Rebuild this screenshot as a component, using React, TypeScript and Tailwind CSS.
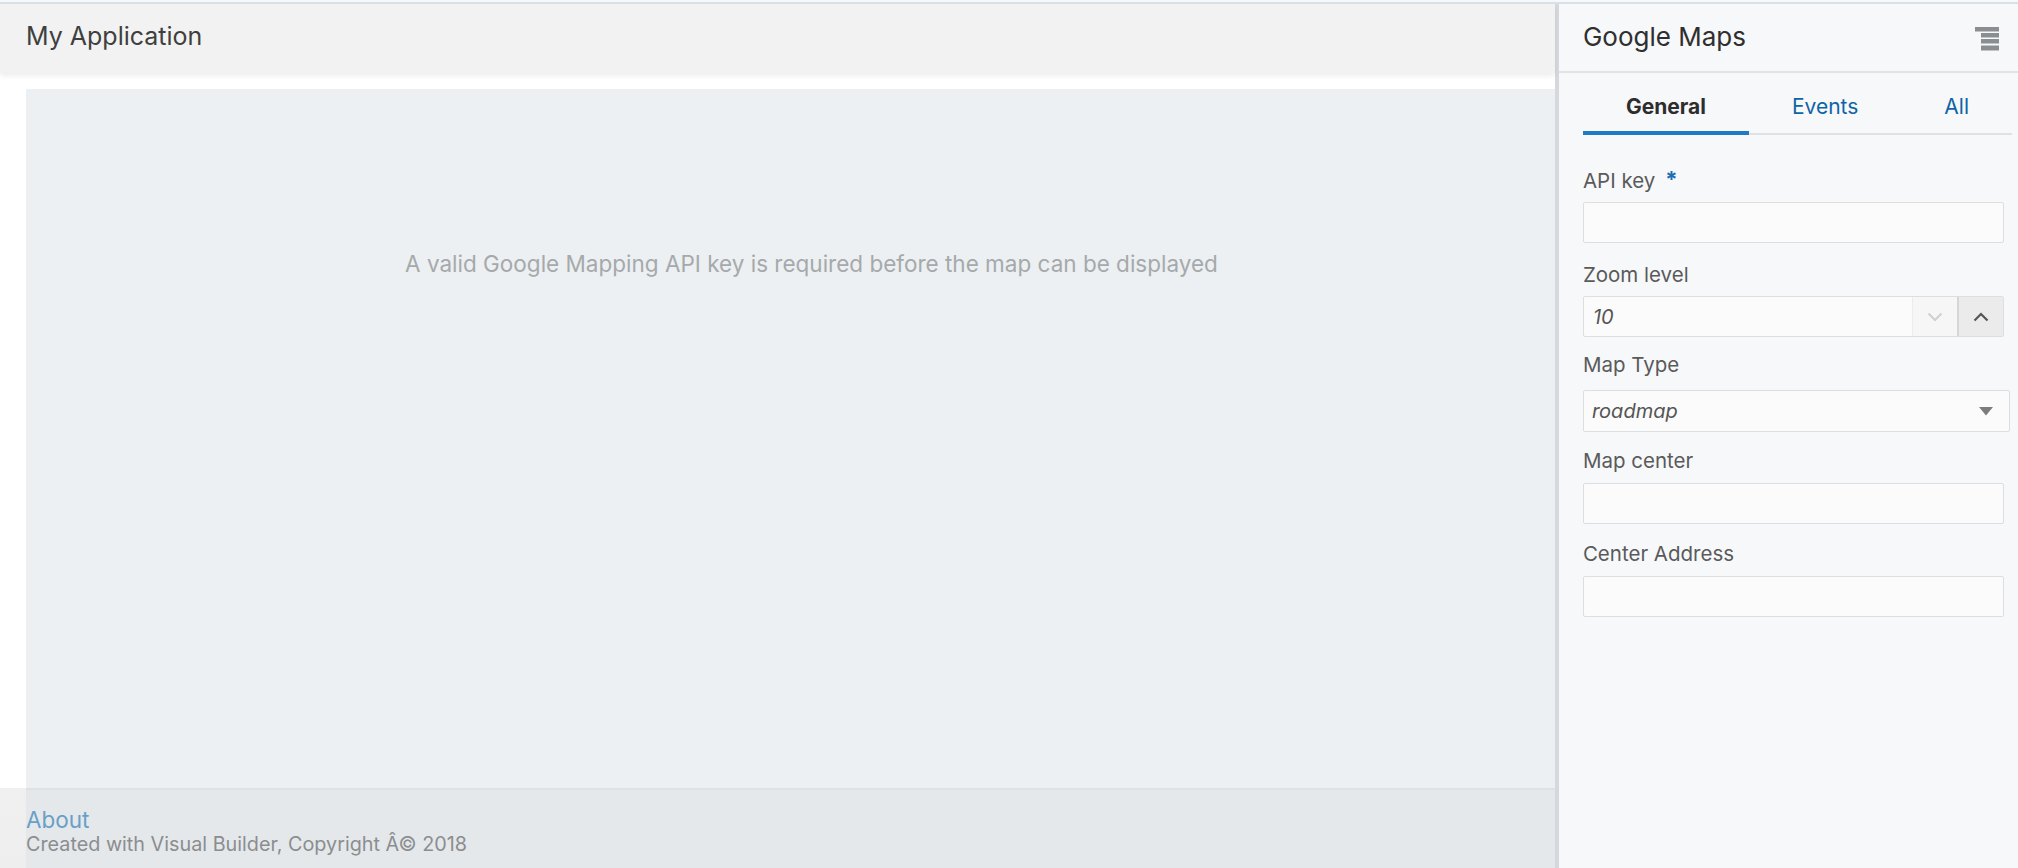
import React from "react";

const font = { fontFamily: "Inter, 'Noto Sans', sans-serif" };

function Field({ label, required, mt, children, gap }: { label: string; required?: boolean; mt: string; gap: string; children: React.ReactNode }) {
  return (
    <div className={mt}>
      <div className="h-[24px] flex items-center text-[20.5px] leading-[24px] text-[#5a5a5a]">
        <span>{label}</span>
        {required && <span className="ml-[10px] text-[22px] font-bold text-[#1c6db3] leading-none -mt-[4px]">*</span>}
      </div>
      <div className={gap}>{children}</div>
    </div>
  );
}

function TextBox() {
  return <div className="h-[41px] w-[421px] rounded-[2px] border border-[#dcdee0] bg-[#fbfbfb]" />;
}

export default function App() {
  return (
    <div className="w-[2018px] h-[868px] overflow-hidden bg-white" style={font}>
      <div className="h-[4px] bg-[#f4f6f8] border-t-2 border-t-[#f7f8fa] border-b-2 border-b-[#d9e1e8]" />
      <div className="flex h-[864px]">
        {/* Left main */}
        <div className="w-[1556px] flex flex-col bg-white">
          <div className="h-[69px] bg-[#f2f2f2] flex items-center pl-[26px] pb-[4px] shadow-[0_3px_5px_rgba(0,0,0,0.07)] relative z-10">
            <span className="text-[25px] text-[#3f3f3f] leading-none">My Application</span>
          </div>
          <div className="h-[16px] bg-white" />
          <div className="flex-1 flex pl-[26px]">
            <div className="flex-1 bg-[#ecf0f2] flex justify-center pl-[42px] pt-[162px]">
              <span className="text-[22.5px] leading-[26px] text-[#a6a9ab] h-[26px]">
                A valid Google Mapping API key is required before the map can be displayed
              </span>
            </div>
          </div>
          <div className="h-[80px] flex">
            <div className="w-[26px] bg-gradient-to-b from-[#f0f0f0] to-[#eeeeee]" />
            <div className="flex-1 bg-[#e4e8eb] border-t-2 border-t-[#dde1e4] pt-[18px]">
              <div className="text-[22.5px] leading-[24px] text-[#6a9fc6]">About</div>
              <div className="text-[19.8px] leading-[24px] text-[#8b8d8f]">Created with Visual Builder, Copyright Â© 2018</div>
            </div>
          </div>
        </div>
        {/* Divider */}
        <div className="w-[4px] bg-[#d5d8dc]" />
        {/* Right panel */}
        <div className="flex-1 bg-[#f7f8fa] flex flex-col">
          <div className="h-[69px] border-b-2 border-b-[#e0e4e8] flex items-center justify-between pl-[24px] pr-[18px]">
            <span className="text-[26px] text-[#2f2f2f] leading-none -mt-[2px]">Google Maps</span>
            <svg width="26" height="26" viewBox="0 0 26 26" className="mt-[2px]">
              <rect x="1" y="1" width="24" height="4.5" fill="#8b8e91" />
              <rect x="7" y="7" width="18" height="4.5" fill="#8b8e91" />
              <rect x="7" y="13" width="18" height="4.5" fill="#8b8e91" />
              <rect x="7" y="19.5" width="18" height="5" fill="#8b8e91" />
            </svg>
          </div>
          <div className="pl-[24px] pr-[6px]">
            <div className="mt-[10px] flex border-b-2 border-b-[#dde2e7] text-[21px]">
              <div className="-mb-[2px] h-[52px] flex items-center px-[43px] border-b-4 border-b-[#1f7bc4] font-bold text-[#2d2d2d]">General</div>
              <div className="-mb-[2px] h-[52px] flex items-center px-[43px] border-b-4 border-b-transparent text-[#0f64a8]">Events</div>
              <div className="-mb-[2px] h-[52px] flex items-center px-[43px] border-b-4 border-b-transparent text-[#0f64a8]">All</div>
            </div>
            <Field label="API key" required mt="mt-[34px]" gap="mt-[9px]">
              <TextBox />
            </Field>
            <Field label="Zoom level" mt="mt-[20px]" gap="mt-[9px]">
              <div className="h-[41px] w-[421px] rounded-[2px] border border-[#dcdee0] bg-[#fbfbfb] flex overflow-hidden">
                <div className="flex-1 flex items-center pl-[9px] italic text-[20px] text-[#555]">10</div>
                <div className="w-[45px] bg-[#f6f6f6] border-l border-l-[#ececec] flex items-center justify-center">
                  <svg width="16" height="10" viewBox="0 0 16 10"><path d="M1.5 1.5 L8 8 L14.5 1.5" fill="none" stroke="#cfd1d3" strokeWidth="2" /></svg>
                </div>
                <div className="w-[46px] bg-[#ebebeb] border-l-2 border-l-[#d6d6d6] flex items-center justify-center">
                  <svg width="16" height="10" viewBox="0 0 16 10"><path d="M1.5 8.5 L8 2 L14.5 8.5" fill="none" stroke="#555" strokeWidth="2.2" /></svg>
                </div>
              </div>
            </Field>
            <Field label="Map Type" mt="mt-[16px]" gap="mt-[13px]">
              <div className="h-[42px] w-[427px] rounded-[2px] border border-[#dcdee0] bg-[#fbfbfb] flex items-center justify-between pl-[8px] pr-[16px]">
                <span className="italic text-[20px] text-[#555]">roadmap</span>
                <svg width="14" height="9" viewBox="0 0 14 9"><path d="M0 0 L14 0 L7 8.5 Z" fill="#7a7c7e" /></svg>
              </div>
            </Field>
            <Field label="Map center" mt="mt-[17px]" gap="mt-[10px]">
              <TextBox />
            </Field>
            <Field label="Center Address" mt="mt-[18px]" gap="mt-[10px]">
              <TextBox />
            </Field>
          </div>
        </div>
      </div>
    </div>
  );
}
